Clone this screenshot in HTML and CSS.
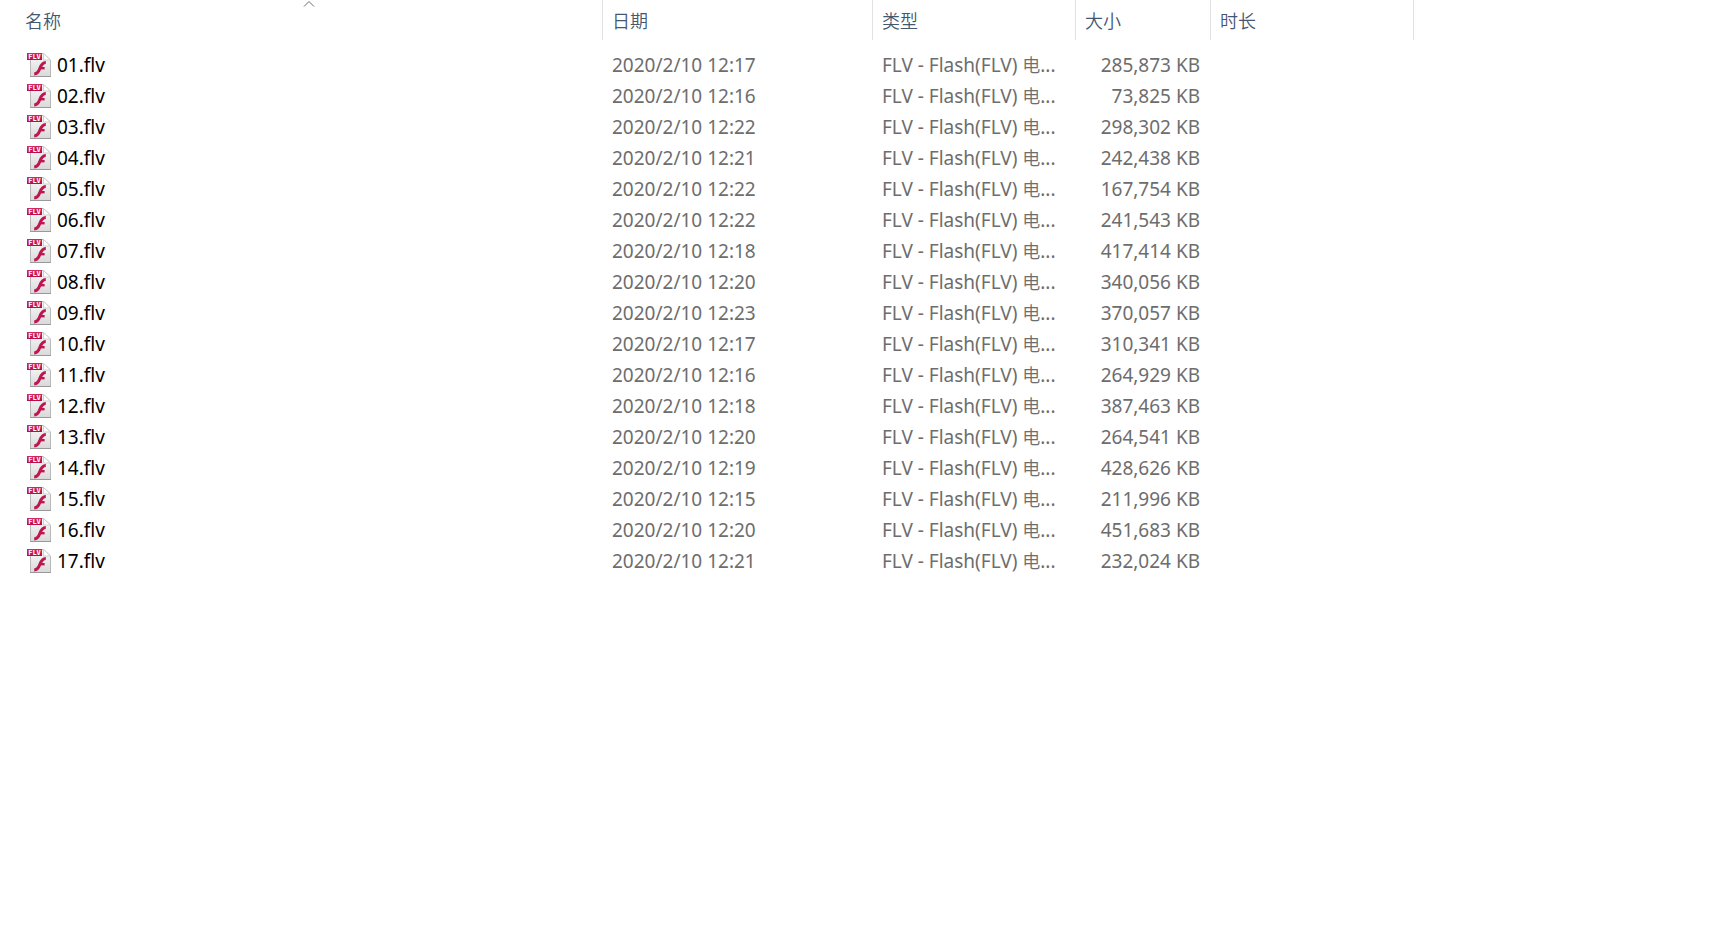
FILE: index.html
```html
<!DOCTYPE html>
<html lang="zh-CN">
<head>
    <meta charset="UTF-8">
    <meta name="viewport" content="width=device-width, initial-scale=1.0">
    <title>文件列表</title>
    <link rel="stylesheet" href="styles.css">
</head>
<body>
    <svg class="defs" aria-hidden="true">
        <defs>
            <linearGradient id="paper" x1="0" y1="0" x2="0" y2="1">
                <stop offset="0" stop-color="#fafafa"/>
                <stop offset="1" stop-color="#d9d9d9"/>
            </linearGradient>
            <linearGradient id="badge" x1="0" y1="0" x2="0" y2="1">
                <stop offset="0" stop-color="#d42a62"/>
                <stop offset="1" stop-color="#b80c48"/>
            </linearGradient>
        </defs>
    </svg>

    <main>
        <table class="files">
            <colgroup>
                <col class="col-name">
                <col class="col-date">
                <col class="col-type">
                <col class="col-size">
                <col class="col-length">
                <col>
            </colgroup>
            <thead>
                <tr>
                    <th aria-sort="ascending">
                        <button type="button">名称</button>
                        <svg class="sort" viewBox="0 0 12 7" aria-hidden="true"><path d="M1 6.5L6 1.5L11 6.5"/></svg>
                    </th>
                    <th><button type="button">日期</button></th>
                    <th><button type="button">类型</button></th>
                    <th><button type="button">大小</button></th>
                    <th><button type="button">时长</button></th>
                    <td></td>
                </tr>
            </thead>
            <tbody id="file-list">
                <!-- 动态插入文件行 -->
            </tbody>
        </table>
    </main>

    <script>
        // 文件数据
        const files = [
            { name: "01.flv", time: "12:17", size: "285,873" },
            { name: "02.flv", time: "12:16", size: "73,825" },
            { name: "03.flv", time: "12:22", size: "298,302" },
            { name: "04.flv", time: "12:21", size: "242,438" },
            { name: "05.flv", time: "12:22", size: "167,754" },
            { name: "06.flv", time: "12:22", size: "241,543" },
            { name: "07.flv", time: "12:18", size: "417,414" },
            { name: "08.flv", time: "12:20", size: "340,056" },
            { name: "09.flv", time: "12:23", size: "370,057" },
            { name: "10.flv", time: "12:17", size: "310,341" },
            { name: "11.flv", time: "12:16", size: "264,929" },
            { name: "12.flv", time: "12:18", size: "387,463" },
            { name: "13.flv", time: "12:20", size: "264,541" },
            { name: "14.flv", time: "12:19", size: "428,626" },
            { name: "15.flv", time: "12:15", size: "211,996" },
            { name: "16.flv", time: "12:20", size: "451,683" },
            { name: "17.flv", time: "12:21", size: "232,024" }
        ];

        // FLV 文件图标
        const icon = `
            <svg class="icon" viewBox="0 0 24 24" aria-hidden="true">
                <path d="M3.5 0.5H16.5L23.5 7V23.5H3.5Z" fill="url(#paper)" stroke="#b9b9b9"/>
                <path d="M3 23.5H24" stroke="#999" fill="none"/>
                <path d="M16.5 0.5V7H23.5Z" fill="#fff" stroke="#cfcfcf"/>
                <path d="M18.8 9.6C15.2 9.5 14 12.5 12.9 15.3C11.8 18.5 10.7 20.8 7.2 21" fill="none" stroke="#bd1650" stroke-width="3"/>
                <path d="M13.2 15.2H17.6" stroke="#bd1650" stroke-width="2.4"/>
                <rect width="15" height="7" fill="url(#badge)"/>
                <text x="7.5" y="6" class="badge-text">FLV</text>
            </svg>`;

        const list = document.getElementById("file-list");
        files.forEach(file => {
            const row = document.createElement("tr");
            row.innerHTML = `
                <td><div class="file">${icon}<span>${file.name}</span></div></td>
                <td>2020/2/10 ${file.time}</td>
                <td>FLV - Flash(FLV) <span class="cjk">电</span>...</td>
                <td class="size">${file.size} KB</td>
                <td></td>
                <td></td>
            `;
            list.appendChild(row);
        });
    </script>
</body>
</html>
```
FILE: styles.css
```css
body {
    margin: 0;
    background-color: #fff;
    color: #6d6d6d;
    font-family: "Noto Sans", "Noto Sans CJK SC", sans-serif;
    font-size: 19px;
}
main {
    padding-left: 16px;
}
.defs {
    position: absolute;
    width: 0;
    height: 0;
}
.files {
    width: 100%;
    table-layout: fixed;
    border-collapse: separate;
    border-spacing: 0;
}
.col-name {
    width: 587px;
}
.col-date {
    width: 270px;
}
.col-type,
.col-length {
    width: 203px;
}
.col-size {
    width: 135px;
}
th {
    position: relative;
    box-sizing: border-box;
    height: 40px;
    padding: 0;
    border-right: 1px solid #e2e2e2;
}
th button {
    display: block;
    width: 100%;
    height: 40px;
    padding: 0 9px;
    border: 0;
    background: none;
    color: #43586f;
    font-family: "Noto Sans CJK SC", sans-serif;
    font-size: 18px;
    font-weight: 350;
    text-align: left;
}
.sort {
    position: absolute;
    top: 0;
    left: 50%;
    width: 12px;
    height: 7px;
    margin-left: -6px;
    fill: none;
    stroke: #6d6d6d;
}
tbody::before {
    content: "";
    display: block;
    height: 9px;
}
tbody td {
    height: 31px;
    padding: 0 11px 0 9px;
    line-height: 30px;
    white-space: nowrap;
}
.cjk {
    font-size: 18px;
    font-weight: 350;
}
.file {
    display: flex;
    align-items: center;
    gap: 6px;
    color: #000;
}
.icon {
    width: 24px;
    height: 24px;
    margin-left: 2px;
}
.size {
    text-align: right;
}
.badge-text {
    fill: #fff;
    font-family: "DejaVu Sans Mono", monospace;
    font-size: 7px;
    font-weight: 700;
    text-anchor: middle;
}
```
